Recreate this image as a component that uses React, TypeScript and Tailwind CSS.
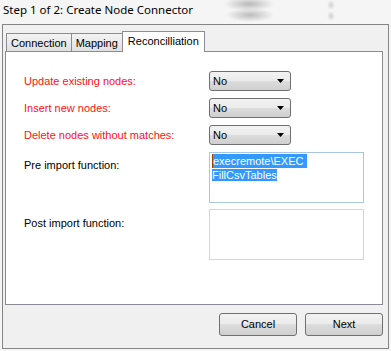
import React from 'react';

const sans = { fontFamily: '"Liberation Sans", Arial, sans-serif' };

function Combo({ value }: { value: string }) {
    return (
        <div className="relative flex h-[20px] w-[82px] items-center rounded-[3px] border border-[#707070] bg-[linear-gradient(#f2f2f2_0%,#ebebeb_50%,#dddddd_50%,#cfcfcf_100%)] pl-[3px] text-[11px] text-black">
            <span>{value}</span>
            {/* arrow */}
            <svg className="absolute right-[6px] top-[7px]" width="7" height="4" viewBox="0 0 7 4">
                <path d="M0 0h7L3.5 4z" fill="#000" />
            </svg>
        </div>
    );
}

function Button({ label }: { label: string }) {
    return (
        <div className="flex h-[23px] w-[78px] items-center justify-center rounded-[3px] border border-[#707070] bg-[linear-gradient(#f2f2f2_0%,#ebebeb_50%,#dddddd_50%,#cfcfcf_100%)] text-[11px] text-black">
            {label}
        </div>
    );
}

export default function App() {
    const tabs = ['Connection', 'Mapping'];

    return (
        <div className="relative h-[351px] w-[391px] overflow-hidden bg-[#f5f5f5] text-black" style={sans}>
            {/* blurred glass behind title bar */}
            <div className="absolute left-[224px] top-[-3px] h-[14px] w-[50px] bg-[radial-gradient(closest-side,#b8b8b8,transparent)]" />
            <div className="absolute left-[226px] top-[8px] h-[14px] w-[48px] bg-[radial-gradient(closest-side,#bcbcbc,transparent)]" />
            <div className="absolute left-[327px] top-[0px] h-[10px] w-[8px] bg-[radial-gradient(closest-side,#d0d0d0,transparent)]" />
            <div className="absolute left-[327px] top-[11px] h-[10px] w-[8px] bg-[radial-gradient(closest-side,#d0d0d0,transparent)]" />

            {/* title */}
            <div className="relative flex h-[24px] items-start pl-[3px] pt-[1px] text-[11.5px] text-black" style={{ fontFamily: '"Noto Sans", "Open Sans", sans-serif' }}>
                Step 1 of 2: Create Node Connector
            </div>

            {/* dialog body */}
            <div className="relative mx-[2px] flex h-[325px] w-[387px] flex-col border border-[#858585] bg-[#f0f0f0] px-[2px]">
                {/* tab strip */}
                <div className="mt-[6px] flex h-[20px] items-end pl-[1px] text-[11px]">
                    {tabs.map(t => (
                        <div
                            key={t}
                            className="-mr-px flex h-[18px] items-center border border-b-0 border-[#898c95] bg-[linear-gradient(#f3f3f3,#e0e0e0)] px-[4px] pt-[1px]"
                        >
                            {t}
                        </div>
                    ))}
                    <div className="relative z-10 -mb-px flex h-[21px] items-start border border-b-0 border-[#898c95] bg-white px-[5px] pt-[1px]">
                        Reconcilliation
                    </div>
                </div>

                {/* tab panel */}
                <div className="h-[254px] w-[378px] border border-[#898c95] bg-white pl-[18px] pt-[19px] text-[11px]">
                    <div className="flex flex-col gap-[7px]">
                        <div className="flex items-center">
                            <span className="w-[185px] text-[#ff1010]">Update existing nodes:</span>
                            <Combo value="No" />
                        </div>
                        <div className="flex items-center">
                            <span className="w-[185px] text-[#ff1010]">Insert new nodes:</span>
                            <Combo value="No" />
                        </div>
                        <div className="flex items-center">
                            <span className="w-[185px] text-[#ff1010]">Delete nodes without matches:</span>
                            <Combo value="No" />
                        </div>
                        <div className="flex items-start">
                            <span className="mt-[5px] w-[185px]">Pre import function:</span>
                            <div className="h-[51px] w-[155px] border border-[#a9c7e4] px-[2px] pt-[1px] leading-[14px]">
                                <div className="flex">
                                    <span className="w-px bg-[#a04000]" />
                                    <span className="bg-[#3399ff] text-white">execremote\EXEC&nbsp;</span>
                                </div>
                                <div>
                                    <span className="bg-[#3399ff] text-white">FillCsvTables</span>
                                </div>
                            </div>
                        </div>
                        <div className="-mt-px flex items-start">
                            <span className="mt-[6px] w-[185px]">Post import function:</span>
                            <div className="h-[51px] w-[155px] border border-[#d5d5d5]" />
                        </div>
                    </div>
                </div>

                {/* buttons */}
                <div className="mt-[8px] flex justify-end gap-[8px] pr-[3px]">
                    <Button label="Cancel" />
                    <Button label="Next" />
                </div>
            </div>
        </div>
    );
}
